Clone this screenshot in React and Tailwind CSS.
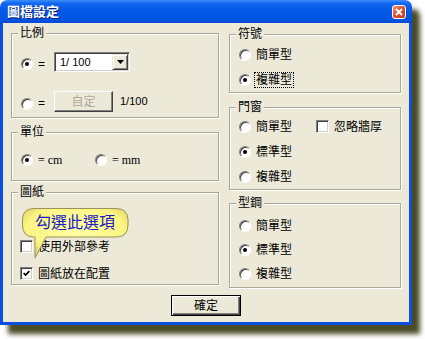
function Radio({ checked }) {
  return (
    <span className="flex h-[12px] w-[12px] shrink-0 items-center justify-center rounded-full border border-[#808080] border-b-white border-r-white bg-white shadow-[inset_1px_1px_0_#404040]">
      {checked && <span className="h-[4px] w-[4px] rounded-full bg-black" />}
    </span>
  );
}

function Checkbox({ checked }) {
  return (
    <span className="flex h-[13px] w-[13px] shrink-0 items-center justify-center border border-[#808080] border-b-white border-r-white bg-white shadow-[inset_1px_1px_0_#404040,inset_-1px_-1px_0_#d4d0c8]">
      {checked && (
        <svg width="7" height="7" viewBox="0 0 7 7">
          <polyline points="0.6,3 2.5,5 6.4,1.2" fill="none" stroke="black" strokeWidth="1.7" />
        </svg>
      )}
    </span>
  );
}

function Group({ title, className, children }) {
  return (
    <fieldset className={`m-0 border border-[#aca899] p-0 shadow-[inset_1px_1px_0_#fff,1px_1px_0_#fff] ${className}`}>
      <legend className="ml-[6px] bg-[#ece9d8] px-[2px] text-[12px] leading-[12px]">{title}</legend>
      {children}
    </fieldset>
  );
}

function Option({ label, checked, focus, className = '' }) {
  return (
    <div className={`ml-[9px] flex h-[12px] items-center ${className}`}>
      <Radio checked={checked} />
      <span className={`ml-[5px] leading-[12px] ${focus ? 'outline-1 outline-offset-1 outline-dotted outline-black' : ''}`}>{label}</span>
    </div>
  );
}

export default function App() {
  return (
    <div className="h-[339px] w-[425px] bg-white font-['Liberation_Sans','Noto_Sans_CJK_TC',sans-serif] text-[12px] text-black">
      <div className="relative flex h-[325px] w-[412px] flex-col rounded-t-[7px] shadow-[8px_9px_5px_rgba(44,42,0,0.85)]">
        {/* title bar */}
        <div className="flex h-[23px] shrink-0 items-center justify-between rounded-t-[7px] bg-[linear-gradient(180deg,#3d8ffc_0%,#1366ee_14%,#0058e6_50%,#0054e2_85%,#0a48d4_100%)] pl-[7px] pr-[6px]">
          <span className="text-[13px] font-bold leading-none text-white [text-shadow:1px_1px_0_#0a1f7a]">圖檔設定</span>
          <span className="flex h-[14px] w-[14px] items-center justify-center rounded-[3px] border border-white bg-[linear-gradient(135deg,#f29a7c_0%,#e0522e_45%,#c83a18_100%)]">
            <svg width="8" height="8" viewBox="0 0 8 8">
              <path d="M1 1 L7 7 M7 1 L1 7" stroke="white" strokeWidth="1.9" />
            </svg>
          </span>
        </div>

        {/* body */}
        <div className="flex flex-1 flex-col border-x-[3px] border-b-[3px] border-[#0b4fe0] bg-[#ece9d8] px-[8px]">
          <div className="flex items-start gap-[10px]">
            {/* left column */}
            <div className="flex w-[208px] flex-col pt-[4px]">
              <Group title="比例" className="h-[91px]">
                <div className="ml-[9px] mt-[13px] flex items-start">
                  <span className="mt-[6px]"><Radio checked /></span>
                  <span className="ml-[5px] mt-[6px] w-[16px] leading-[12px]">=</span>
                  <div className="flex h-[20px] w-[76px] items-center border border-[#808080] border-b-white border-r-white bg-white shadow-[inset_1px_1px_0_#404040,inset_-1px_-1px_0_#d4d0c8]">
                    <span className="flex-1 pl-[5px] text-[11px] leading-none">1/ 100</span>
                    <span className="mr-[1px] flex h-[16px] w-[16px] items-center justify-center border border-[#ece9d8] border-b-[#404040] border-r-[#404040] bg-[#ece9d8] shadow-[inset_1px_1px_0_#fff,inset_-1px_-1px_0_#808080]">
                      <svg width="7" height="4" viewBox="0 0 7 4">
                        <polygon points="0,0 7,0 3.5,4" fill="black" />
                      </svg>
                    </span>
                  </div>
                </div>
                <div className="ml-[9px] mt-[19px] flex items-start">
                  <span className="mt-[7px]"><Radio /></span>
                  <span className="ml-[5px] mt-[6px] w-[16px] leading-[12px]">=</span>
                  <span className="flex h-[21px] w-[59px] items-center justify-center border border-white border-b-[#404040] border-r-[#404040] bg-[#ece9d8] text-[12px] text-[#aca899] shadow-[inset_-1px_-1px_0_#808080]">自定</span>
                  <span className="ml-[7px] mt-[4px] text-[11px] leading-[12px]">1/100</span>
                </div>
              </Group>

              <Group title="單位" className="mt-[8px] h-[55px]">
                <div className="ml-[9px] mt-[16px] flex h-[12px] items-center">
                  <Radio checked />
                  <span className="ml-[5px] w-[57px] font-['Liberation_Serif',serif] text-[12px] leading-[12px]">= cm</span>
                  <Radio />
                  <span className="ml-[5px] font-['Liberation_Serif',serif] text-[12px] leading-[12px]">= mm</span>
                </div>
              </Group>

              <Group title="圖紙" className="mt-[5px] h-[99px]">
                <div className="ml-[8px] mt-[42px] flex h-[13px] items-center">
                  <Checkbox />
                  <span className="ml-[5px] leading-[12px]">使用外部參考</span>
                </div>
                <div className="ml-[8px] mt-[14px] flex h-[13px] items-center">
                  <Checkbox checked />
                  <span className="ml-[5px] leading-[12px]">圖紙放在配置</span>
                </div>
              </Group>
            </div>

            {/* right column */}
            <div className="flex w-[172px] flex-col pt-[5px]">
              <Group title="符號" className="h-[65px]">
                <Option label="簡單型" className="mt-[9px]" />
                <Option label="複雜型" checked focus className="mt-[13px]" />
              </Group>

              <Group title="門窗" className="mt-[8px] h-[89px]">
                <div className="ml-[9px] mt-[8px] flex h-[12px] items-center">
                  <Radio />
                  <span className="ml-[5px] w-[60px] leading-[12px]">簡單型</span>
                  <span className="-mt-[1px]"><Checkbox /></span>
                  <span className="ml-[5px] leading-[12px]">忽略牆厚</span>
                </div>
                <Option label="標準型" checked className="mt-[13px]" />
                <Option label="複雜型" className="mt-[13px]" />
              </Group>

              <Group title="型鋼" className="mt-[7px] h-[91px]">
                <Option label="簡單型" className="mt-[11px]" />
                <Option label="標準型" checked className="mt-[12px]" />
                <Option label="複雜型" className="mt-[12px]" />
              </Group>
            </div>
          </div>

          <div className="mt-[7px] flex justify-center">
            <span className="flex h-[21px] w-[70px] items-center justify-center border border-black bg-[#ece9d8] shadow-[inset_1px_1px_0_#fff,inset_-1px_-1px_0_#404040,inset_-2px_-2px_0_#808080]">確定</span>
          </div>
        </div>

        {/* callout */}
        <div className="absolute left-[22px] top-[208px] h-[52px] w-[108px]">
          <svg width="108" height="52" viewBox="0 0 108 52" className="absolute left-0 top-0">
            <defs>
              <radialGradient id="bub" cx="50%" cy="40%" r="65%">
                <stop offset="0%" stopColor="#ffffa8" />
                <stop offset="70%" stopColor="#fbf582" />
                <stop offset="100%" stopColor="#d9d06a" />
              </radialGradient>
            </defs>
            <path
              d="M12 0.5 H94 Q106 0.5 106 12 V17 Q106 29 94 29 H24 L13 50 L13 29 H12 Q0.5 29 0.5 17 V12 Q0.5 0.5 12 0.5 Z"
              fill="url(#bub)"
              stroke="#9a9458"
              strokeWidth="1"
            />
          </svg>
          <div className="absolute left-0 top-0 flex h-[29px] w-[106px] items-center justify-center text-[16px] leading-none text-[#1c1cc4]">勾選此選項</div>
        </div>
      </div>
    </div>
  );
}
